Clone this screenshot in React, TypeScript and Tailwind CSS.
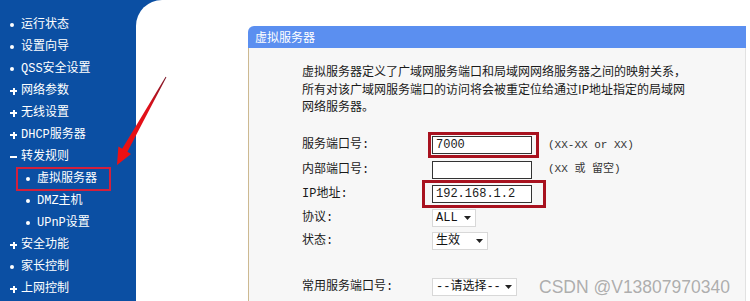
const MENU: Array<{ label: string; mark: "dot" | "plus" | "minus"; sub?: boolean; active?: boolean }> = [
  { label: "运行状态", mark: "dot" },
  { label: "设置向导", mark: "dot" },
  { label: "QSS安全设置", mark: "dot" },
  { label: "网络参数", mark: "plus" },
  { label: "无线设置", mark: "plus" },
  { label: "DHCP服务器", mark: "plus" },
  { label: "转发规则", mark: "minus" },
  { label: "虚拟服务器", mark: "dot", sub: true, active: true },
  { label: "DMZ主机", mark: "dot", sub: true },
  { label: "UPnP设置", mark: "dot", sub: true },
  { label: "安全功能", mark: "plus" },
  { label: "家长控制", mark: "dot" },
  { label: "上网控制", mark: "plus" },
];

const mono = "font-['Liberation_Mono','Noto_Sans_CJK_SC',monospace]";

function Mark({ kind }: { kind: "dot" | "plus" | "minus" }) {
  if (kind === "dot") return <span className="block h-[4px] w-[4px] rounded-full bg-white" />;
  if (kind === "minus") return <span className="block h-[2px] w-[7px] bg-white" />;
  return (
    <span className="relative block h-[7px] w-[7px]">
      <span className="absolute left-0 top-[2.5px] h-[2px] w-[7px] bg-white" />
      <span className="absolute left-[2.5px] top-0 h-[7px] w-[2px] bg-white" />
    </span>
  );
}

function Select({ label, w }: { label: string; w: string }) {
  return (
    <div className={`flex h-[18px] ${w} items-center justify-between border border-[#d8d8d8] bg-white pl-[3px] pr-[4px] text-[12px] text-[#111]`}>
      <span>{label}</span>
      <svg width="7" height="4" viewBox="0 0 7 4">
        <path d="M0 0h7L3.5 4z" fill="#222" />
      </svg>
    </div>
  );
}

export default function App() {
  return (
    <div className={`relative flex h-[301px] w-[750px] overflow-hidden bg-[#0b4fa3] ${mono}`}>
      <nav className="w-[136px] shrink-0 pt-[14px] text-[12px] text-white">
        {MENU.map((m) => (
          <div
            key={m.label}
            className={`flex h-[22px] items-center ${m.sub ? "pl-[26px]" : "pl-[10px]"} ${
              m.active ? "-my-[1px] ml-[16px] h-[24px] w-[95px] border-2 border-[#d3203c] !pl-[8px]" : ""
            }`}
          >
            <span className="flex w-[11px] justify-start">
              <Mark kind={m.mark} />
            </span>
            <span>{m.label}</span>
          </div>
        ))}
      </nav>

      <main className="flex-1 rounded-tl-[26px] bg-white pl-[112px] pt-[26px]">
        <section className="flex h-full flex-col pr-[4px]">
          <div className="flex h-[22px] items-center rounded-tl-[6px] bg-[#5b8ff0] pl-[7px] text-[12px] text-white font-['Noto_Sans_CJK_SC',sans-serif]">
            虚拟服务器
          </div>
          <div className="flex-1 border-l border-r border-l-[#cdb991] border-r-[#e2e2e2] bg-[#f7f7f7] pl-[53px] pt-[14px] text-[12px] text-[#1a1a1a]">
            <p className="leading-[17.5px] font-['Noto_Sans_CJK_SC',sans-serif]">
              虚拟服务器定义了广域网服务端口和局域网网络服务器之间的映射关系，
              <br />
              所有对该广域网服务端口的访问将会被重定位给通过IP地址指定的局域网
              <br />
              网络服务器。
            </p>

            <div className="mt-[18px] flex flex-col">
              <div className="flex h-[25px] items-center">
                <span className="w-[130px]">服务端口号:</span>
                <div className="relative h-[18px] w-[100px] border border-[#333] bg-white pl-[3px] text-[12px] leading-[16px]">
                  7000
                  <span className="absolute -left-[5px] -right-[8px] -top-[5px] -bottom-[5px] border-[3px] border-[#a8121f]" />
                </div>
                <span className="ml-[16px] text-[11px] text-[#333]">(XX-XX or XX)</span>
              </div>
              <div className="flex h-[24px] items-center">
                <span className="w-[130px]">内部端口号:</span>
                <div className="h-[18px] w-[100px] border border-[#333] bg-white" />
                <span className="ml-[16px] text-[11px] text-[#333]">(XX 或 留空)</span>
              </div>
              <div className="flex h-[24px] items-center">
                <span className="w-[130px]">IP地址:</span>
                <div className="relative h-[18px] w-[100px] border border-[#333] bg-white pl-[3px] text-[12px] leading-[16px]">
                  192.168.1.2
                  <span className="absolute -left-[11px] -right-[15px] -top-[6px] -bottom-[6px] border-[3px] border-[#a8121f]" />
                </div>
              </div>
              <div className="flex h-[24px] items-center">
                <span className="w-[130px]">协议:</span>
                <Select label="ALL" w="w-[44px]" />
              </div>
              <div className="flex h-[23px] items-center">
                <span className="w-[130px]">状态:</span>
                <Select label="生效" w="w-[56px]" />
              </div>
              <div className="mt-[22px] flex h-[24px] items-center">
                <span className="w-[130px]">常用服务端口号:</span>
                <Select label="--请选择--" w="w-[85px]" />
              </div>
            </div>
          </div>
        </section>
      </main>

      <svg className="pointer-events-none absolute left-0 top-0" width="750" height="301" viewBox="0 0 750 301">
        <defs>
          <linearGradient id="arrowFill" x1="166" y1="77" x2="117" y2="165" gradientUnits="userSpaceOnUse">
            <stop offset="0" stopColor="#7a1a2a" />
            <stop offset="0.35" stopColor="#e0101a" />
            <stop offset="1" stopColor="#f01010" />
          </linearGradient>
        </defs>
        <polygon
          points="166.4,77.2 165.6,76.8 122.2,148.8 118.4,146.6 117,165 131,153.9 127.4,151.8"
          fill="url(#arrowFill)"
        />
      </svg>

      <div className="pointer-events-none absolute left-[539px] top-[274px] font-['Liberation_Sans',sans-serif] text-[17.5px] text-[#9a9a9a]/80">
        CSDN @V13807970340
      </div>
    </div>
  );
}
